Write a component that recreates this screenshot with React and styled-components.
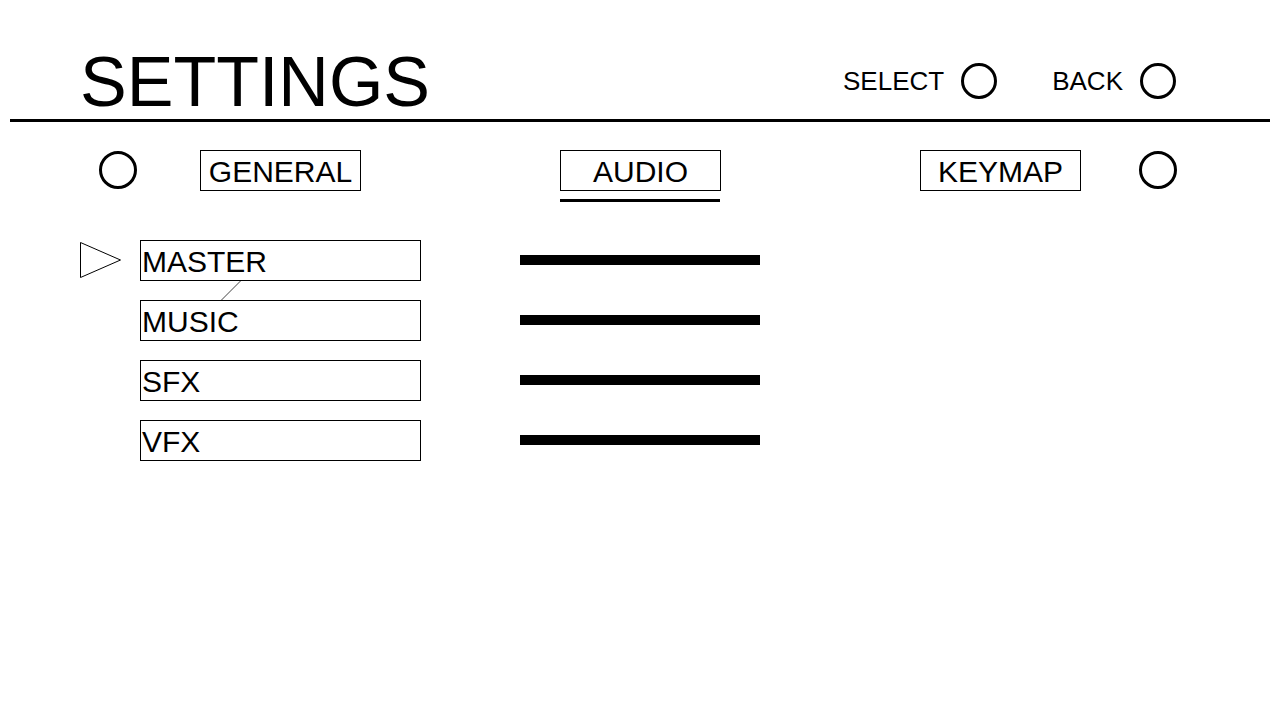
import React from "react";
import styled, { createGlobalStyle } from "styled-components";

const GlobalStyle = createGlobalStyle`
  html, body {
    margin: 0;
    padding: 0;
    background: #fff;
  }
  body {
    font-family: "Liberation Sans", Arial, sans-serif;
    color: #000;
  }
`;

const Page = styled.div`
  width: 1280px;
  height: 720px;
  overflow: hidden;
`;

const Header = styled.header`
  display: flex;
  align-items: center;
  justify-content: space-between;
  margin: 0 10px;
  height: 77px;
  padding: 42px 94px 0 70px;
  border-bottom: 3px solid #000;
`;

const Title = styled.h1`
  margin: 0;
  font-size: 70px;
  font-weight: 400;
  line-height: 70px;
  padding-top: 2px;
`;

const Hints = styled.div`
  display: flex;
  align-items: center;
  gap: 55px;
`;

const Hint = styled.div`
  display: flex;
  align-items: center;
  gap: 17px;
  font-size: 26px;
  line-height: 36px;
`;

const Circle = styled.span`
  display: block;
  box-sizing: border-box;
  width: ${(p) => p.size || 36}px;
  height: ${(p) => p.size || 36}px;
  border: 3px solid #000;
  border-radius: 50%;
  margin-left: ${(p) => p.ml || 0}px;
`;

const TabRow = styled.nav`
  display: flex;
  align-items: flex-start;
  padding: 28px 0 0 99px;
`;

const NavCircle = styled(Circle)`
  margin-top: 1px;
`;

const Tabs = styled.div`
  display: flex;
  gap: 199px;
  margin-left: 63px;
`;

const TabWrap = styled.div`
  display: flex;
  flex-direction: column;
  gap: 8px;
`;

const Tab = styled.div`
  box-sizing: border-box;
  width: 161px;
  height: 41px;
  border: 1px solid #000;
  font-size: 30px;
  line-height: 38px;
  padding-top: 2px;
  text-align: center;
`;

const Underline = styled.div`
  width: 160px;
  height: 3px;
  background: ${(p) => (p.active ? "#000" : "transparent")};
`;

const List = styled.div`
  display: flex;
  flex-direction: column;
  gap: 19px;
  padding: 38px 0 0 80px;
`;

const Row = styled.div`
  display: flex;
  align-items: flex-start;
`;

const Marker = styled.div`
  width: 60px;
  height: 40px;
  display: flex;
  align-items: center;
`;

const Label = styled.div`
  position: relative;
  box-sizing: border-box;
  width: 281px;
  height: 41px;
  border: 1px solid #000;
  font-size: 30px;
  line-height: 38px;
  padding: 2px 0 0 1px;
`;

const Connector = styled.svg`
  position: absolute;
  left: 79px;
  top: 39px;
  overflow: visible;
`;

const Bar = styled.div`
  width: 240px;
  height: 10px;
  margin: 15px 0 0 99px;
  background: #000;
`;

const tabs = ["GENERAL", "AUDIO", "KEYMAP"];
const channels = ["MASTER", "MUSIC", "SFX", "VFX"];

export default function App() {
  const activeTab = "AUDIO";
  const selected = 0;

  return (
    <Page>
      <GlobalStyle />
      <Header>
        <Title>SETTINGS</Title>
        <Hints>
          <Hint>
            SELECT <Circle />
          </Hint>
          <Hint>
            BACK <Circle />
          </Hint>
        </Hints>
      </Header>

      <TabRow>
        <NavCircle size={38} />
        <Tabs>
          {tabs.map((t) => (
            <TabWrap key={t}>
              <Tab>{t}</Tab>
              <Underline active={t === activeTab} />
            </TabWrap>
          ))}
        </Tabs>
        <NavCircle size={38} ml={58} />
      </TabRow>

      <List>
        {channels.map((c, i) => (
          <Row key={c}>
            <Marker>
              {i === selected && (
                <svg width="42" height="38" viewBox="0 0 42 38">
                  <polygon
                    points="0.5,1.5 40.5,19 0.5,36.5"
                    fill="none"
                    stroke="#000"
                    strokeWidth="1"
                  />
                </svg>
              )}
            </Marker>
            <Label>
              {c}
              {i === 0 && (
                <Connector width="22" height="22">
                  <line x1="20.5" y1="1" x2="1" y2="20.5" stroke="#444" strokeWidth="1" />
                </Connector>
              )}
            </Label>
            <Bar />
          </Row>
        ))}
      </List>
    </Page>
  );
}
